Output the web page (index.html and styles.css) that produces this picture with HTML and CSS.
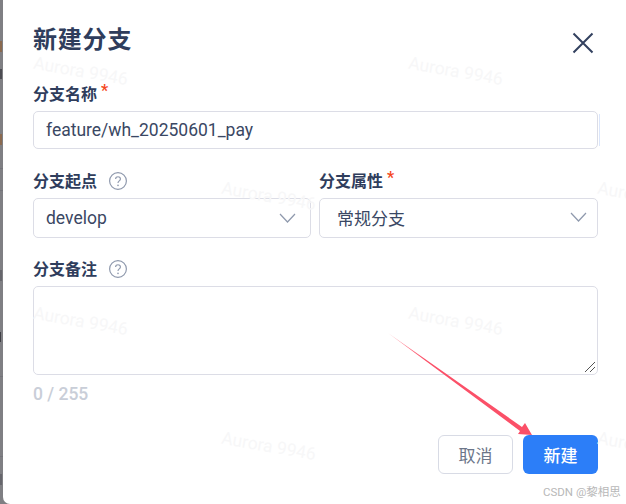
FILE: index.html
```html
<!DOCTYPE html>
<html lang="zh-CN">
<head>
  <meta charset="UTF-8">
  <meta name="viewport" content="width=device-width, initial-scale=1.0">
  <title>新建分支</title>
  <link rel="stylesheet" href="styles.css">
</head>
<body>
  <div class="backdrop"></div>

  <div class="modal">
    <div class="modal-head">
      <h1 class="modal-title">新建分支</h1>
      <svg class="close-icon" width="24" height="24" viewBox="0 0 24 24">
        <path d="M2.5 2.5 L21.5 21.5 M21.5 2.5 L2.5 21.5" fill="none" stroke="#33415f" stroke-width="2"/>
      </svg>
    </div>

    <div class="field field-name">
      <div class="label">分支名称<span class="required">*</span></div>
      <div class="box input-box">feature/wh_20250601_pay</div>
    </div>

    <div class="field-row">
      <div class="field">
        <div class="label">分支起点
          <svg class="help-icon" width="18" height="18" viewBox="0 0 18 18">
            <circle cx="9" cy="9" r="8.4" fill="none" stroke="#8f99ad" stroke-width="1.2"/>
            <path d="M6.6 7 C6.6 4 11.4 4 11.4 7 C11.4 8.9 9 8.9 9 11" fill="none" stroke="#8f99ad" stroke-width="1.2"/>
            <circle cx="9" cy="13.4" r="0.8" fill="#8f99ad"/>
          </svg>
        </div>
        <div class="box select-box select-left">
          <span>develop</span>
          <svg class="chevron" width="17" height="10" viewBox="0 0 17 10">
            <path d="M1 1 L8.5 9 L16 1" fill="none" stroke="#8f99ad" stroke-width="1.2"/>
          </svg>
        </div>
      </div>
      <div class="field">
        <div class="label">分支属性<span class="required">*</span></div>
        <div class="box select-box select-right">
          <span>常规分支</span>
          <svg class="chevron" width="17" height="10" viewBox="0 0 17 10">
            <path d="M1 1 L8.5 9 L16 1" fill="none" stroke="#8f99ad" stroke-width="1.2"/>
          </svg>
        </div>
      </div>
    </div>

    <div class="field">
      <div class="label">分支备注
        <svg class="help-icon" width="18" height="18" viewBox="0 0 18 18">
          <circle cx="9" cy="9" r="8.4" fill="none" stroke="#8f99ad" stroke-width="1.2"/>
          <path d="M6.6 7 C6.6 4 11.4 4 11.4 7 C11.4 8.9 9 8.9 9 11" fill="none" stroke="#8f99ad" stroke-width="1.2"/>
          <circle cx="9" cy="13.4" r="0.8" fill="#8f99ad"/>
        </svg>
      </div>
      <div class="box textarea-box">
        <svg class="resize-grip" width="12" height="12" viewBox="0 0 12 12">
          <path d="M1 11 L11 1 M6 11 L11 6" fill="none" stroke="#555" stroke-width="1"/>
        </svg>
      </div>
      <div class="counter">0 / 255</div>
    </div>

    <div class="modal-foot">
      <button class="btn btn-cancel">取消</button>
      <button class="btn btn-primary">新建</button>
    </div>

    <span class="mark mark-1">Aurora 9946</span>
    <span class="mark mark-2">Aurora 9946</span>
    <span class="mark mark-3">Aurora 9946</span>
    <span class="mark mark-4">Aurora 9946</span>
    <span class="mark mark-5">Aurora 9946</span>
    <span class="mark mark-6">Aurora 9946</span>
    <span class="mark mark-7">Aurora 9946</span>
    <span class="mark mark-8">Aurora 9946</span>
  </div>

  <svg class="arrow" width="626" height="504" viewBox="0 0 626 504">
    <defs>
      <linearGradient id="arrowFill" x1="388" y1="333" x2="532" y2="434" gradientUnits="userSpaceOnUse">
        <stop offset="0" stop-color="#ff8090" stop-opacity="0.7"/>
        <stop offset="0.25" stop-color="#fb5068"/>
        <stop offset="1" stop-color="#fb5068"/>
      </linearGradient>
    </defs>
    <path d="M388 333 L522 427 L525 423 L532 435 L518 434 L520 431 Z" fill="url(#arrowFill)"/>
  </svg>

  <div class="credit">CSDN @黎相思</div>
</body>
</html>
```

FILE: styles.css
```css
html, body {
  margin: 0;
  height: 100%;
  overflow: hidden;
}

body {
  position: relative;
  background: #7f7f83;
  font-family: Roboto, "Noto Sans CJK SC", sans-serif;
  color: #33415f;
}

/* page behind the dialog, only a sliver of it shows */
.backdrop {
  position: absolute;
  left: 0;
  top: 0;
  width: 3px;
  height: 504px;
  background: linear-gradient(#8a6a50, #8a6a50) 0 41px / 2px 11px no-repeat,
    linear-gradient(#4c4c52, #4c4c52) 0 69px / 2px 10px no-repeat,
    linear-gradient(#8a6a50, #8a6a50) 0 134px / 2px 11px no-repeat,
    linear-gradient(#74747a, #74747a) 0 168px / 3px 1px no-repeat,
    linear-gradient(#74747a, #74747a) 0 190px / 3px 1px no-repeat,
    linear-gradient(#66666c, #66666c) 0 270px / 2px 11px no-repeat,
    linear-gradient(#3f3f45, #3f3f45) 0 332px / 1px 10px no-repeat,
    linear-gradient(#74747a, #74747a) 0 376px / 3px 1px no-repeat,
    linear-gradient(#74747a, #74747a) 0 456px / 3px 1px no-repeat,
    linear-gradient(#66666c, #66666c) 0 474px / 2px 11px no-repeat;
}

.modal {
  position: relative;
  margin-left: 3px;
  height: 504px;
  box-sizing: border-box;
  padding: 24px 28px 0 30px;
  background: #fff;
  border-radius: 0 0 0 7px;
  overflow: hidden;
}

.modal-head {
  display: flex;
  justify-content: space-between;
  align-items: flex-start;
  height: 58px;
}

.modal-title {
  margin: 0;
  font-size: 24px;
  line-height: 32px;
  font-weight: 600;
  letter-spacing: 0.8px;
  color: #2f3d5c;
}

.close-icon {
  margin: 7px 3px 0 0;
}

.label {
  display: flex;
  align-items: center;
  height: 22px;
  margin-bottom: 7px;
  font-size: 16px;
  font-weight: 600;
  color: #2f3d5c;
}

.required {
  align-self: flex-start;
  margin-left: 4px;
  font-size: 16px;
  line-height: 18px;
  color: #f5471d;
}

.help-icon {
  margin: 1px 0 0 12px;
}

.box {
  position: relative;
  box-sizing: border-box;
  background: #fff;
  border: 1px solid #dcdde6;
  border-radius: 5px;
  font-size: 17.5px;
  color: #3a4763;
}

.input-box {
  height: 38px;
  line-height: 36px;
  padding-left: 12px;
}

.input-box::after {
  content: "";
  position: absolute;
  right: -3px;
  top: 2px;
  bottom: 2px;
  width: 1px;
  background: #dbe6fb;
}

.field-name {
  margin-bottom: 20px;
}

.field-row {
  display: grid;
  grid-template-columns: 278px 279px;
  gap: 8px;
  margin-bottom: 19px;
}

.select-box {
  display: flex;
  justify-content: space-between;
  align-items: center;
  height: 40px;
  padding: 0 14px 0 12px;
}

.select-right {
  padding: 0 10px 2px 17px;
  font-size: 17px;
}

.textarea-box {
  height: 89px;
}

.resize-grip {
  position: absolute;
  right: 1px;
  bottom: 1px;
}

.counter {
  margin-top: 7px;
  font-size: 17.5px;
  font-weight: 500;
  line-height: 24px;
  color: #c9ced8;
}

.modal-foot {
  display: flex;
  justify-content: flex-end;
  gap: 10px;
  margin-top: 29px;
}

.btn {
  width: 75px;
  height: 39px;
  border-radius: 6px;
  font-family: inherit;
  font-size: 17px;
  font-weight: 500;
  padding: 0;
}

.btn-cancel {
  background: #fff;
  border: 1px solid #d8dbe5;
  color: #6c7689;
  font-weight: 400;
}

.btn-primary {
  background: #2c7ef8;
  border: none;
  color: #fff;
}

.mark {
  position: absolute;
  font-size: 17.5px;
  color: #f7f7f8;
  white-space: nowrap;
  transform: rotate(10deg);
  pointer-events: none;
}

.mark-1 { left: 30px; top: 61px; }
.mark-2 { left: 405px; top: 61px; }
.mark-3 { left: 218px; top: 186px; }
.mark-4 { left: 594px; top: 186px; }
.mark-5 { left: 30px; top: 311px; }
.mark-6 { left: 405px; top: 311px; }
.mark-7 { left: 218px; top: 436px; }
.mark-8 { left: 594px; top: 436px; }

.arrow {
  position: absolute;
  left: 0;
  top: 0;
  pointer-events: none;
}

.credit {
  position: absolute;
  left: 543px;
  top: 484px;
  font-size: 11.5px;
  line-height: 16px;
  color: #b8b8b8;
  white-space: nowrap;
}
```
